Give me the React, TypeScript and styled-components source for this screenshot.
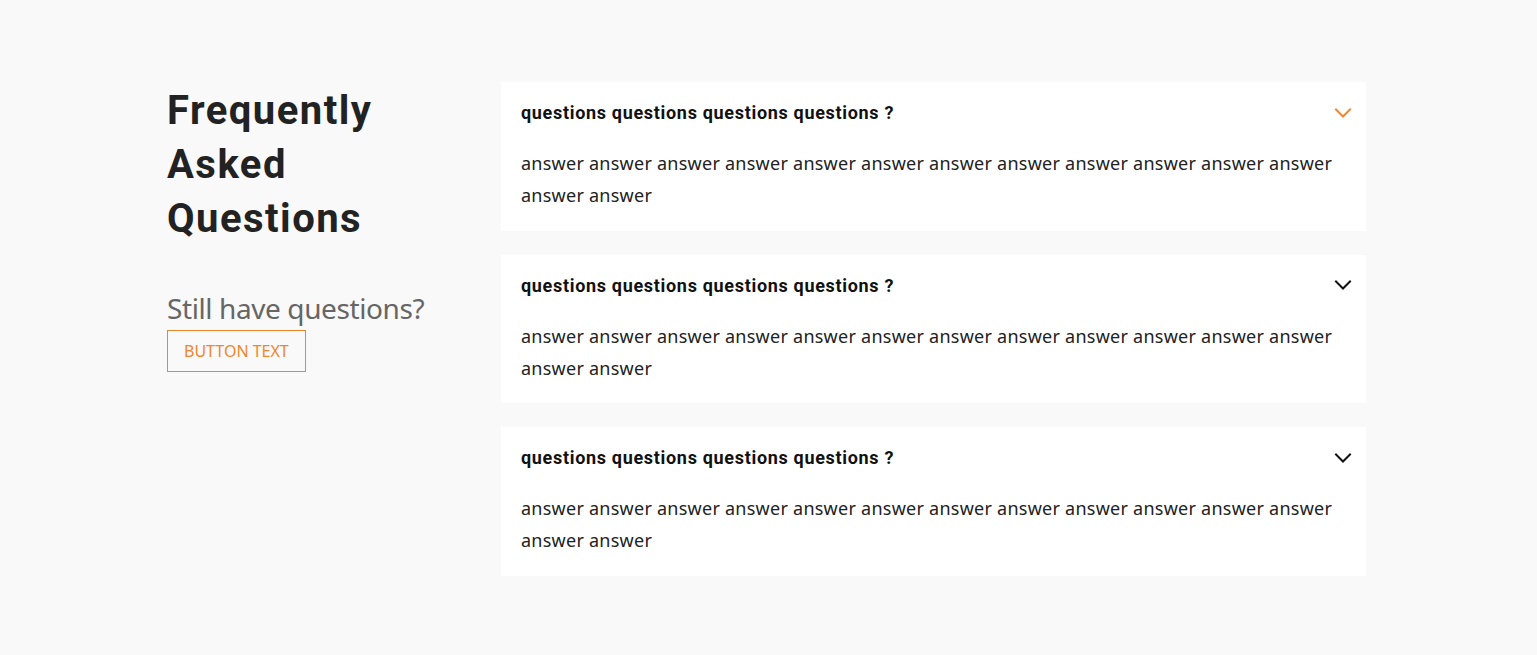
import React from 'react';
import styled, { createGlobalStyle } from 'styled-components';

const GlobalStyle = createGlobalStyle`
  * { box-sizing: border-box; }
  body {
    margin: 0;
    background: #f9f9f9;
    font-family: 'Noto Sans', 'Open Sans', sans-serif;
    color: #222222;
  }
`;

interface FaqItem {
  question: string;
  answer: string;
  open?: boolean;
}

const items: FaqItem[] = [
  {
    question: 'questions questions questions questions ?',
    answer: Array(14).fill('answer').join(' '),
    open: true,
  },
  {
    question: 'questions questions questions questions ?',
    answer: Array(14).fill('answer').join(' '),
  },
  {
    question: 'questions questions questions questions ?',
    answer: Array(14).fill('answer').join(' '),
  },
];

function Chevron({ active }: { active?: boolean }) {
  return (
    <StyledChevron width="18" height="11" viewBox="0 0 18 11" fill="none">
      <path
        d="M2 1.5L9 8.5L16 1.5"
        stroke={active ? '#f0862b' : '#111111'}
        strokeWidth="2"
        strokeLinecap="square"
      />
    </StyledChevron>
  );
}

function App() {
  return (
    <>
      <GlobalStyle />
      <StyledPage>
        <StyledContainer>
          <StyledAside>
            <StyledTitle>
              Frequently
              <br />
              Asked
              <br />
              Questions
            </StyledTitle>
            <StyledSubtitle>Still have questions?</StyledSubtitle>
            <StyledButton type="button">BUTTON TEXT</StyledButton>
          </StyledAside>
          <StyledList>
            {items.map((item, i) => (
              <StyledCard key={i}>
                <StyledQuestionRow>
                  <StyledQuestion>{item.question}</StyledQuestion>
                  <Chevron active={item.open} />
                </StyledQuestionRow>
                <StyledAnswer>{item.answer}</StyledAnswer>
              </StyledCard>
            ))}
          </StyledList>
        </StyledContainer>
      </StyledPage>
    </>
  );
}

const StyledPage = styled.main`
  padding: 82px 0 80px;
  min-height: 655px;
`;

const StyledContainer = styled.div`
  display: grid;
  grid-template-columns: 334px 865px;
  width: 1199px;
  margin-left: 167px;
`;

const StyledAside = styled.div`
  display: flex;
  flex-direction: column;
  align-items: flex-start;
  padding-top: 2px;
`;

const StyledTitle = styled.h2`
  margin: 0;
  font-family: Roboto, 'Liberation Sans', sans-serif;
  font-weight: 700;
  font-size: 40px;
  line-height: 54px;
  letter-spacing: 0.037em;
  color: #222222;
`;

const StyledSubtitle = styled.p`
  margin: 45px 0 5px;
  font-size: 28px;
  line-height: 34px;
  font-weight: 400;
  color: #666666;
  letter-spacing: -0.4px;
`;

const StyledButton = styled.button`
  height: 42px;
  padding: 0 16px;
  background: transparent;
  border: 1px solid #f0862b;
  color: #f0862b;
  font-family: 'Noto Sans', 'Open Sans', sans-serif;
  font-size: 16px;
  cursor: pointer;
`;

const StyledList = styled.div`
  display: flex;
  flex-direction: column;
  gap: 24px;
`;

const StyledCard = styled.section`
  background: #ffffff;
  padding: 19px 14px 19.5px 20px;
`;

const StyledQuestionRow = styled.div`
  display: flex;
  align-items: center;
  justify-content: space-between;
  height: 24px;
`;

const StyledQuestion = styled.h3`
  margin: 0;
  font-family: Roboto, 'Liberation Sans', sans-serif;
  font-weight: 700;
  font-size: 18px;
  line-height: 24px;
  letter-spacing: 0.038em;
  color: #111111;
`;

const StyledChevron = styled.svg`
  flex: none;
`;

const StyledAnswer = styled.p`
  margin: 22px 0 0;
  font-size: 18px;
  line-height: 32px;
  letter-spacing: 0.25px;
  color: #222222;
  padding-right: 10px;
`;

export default App;
